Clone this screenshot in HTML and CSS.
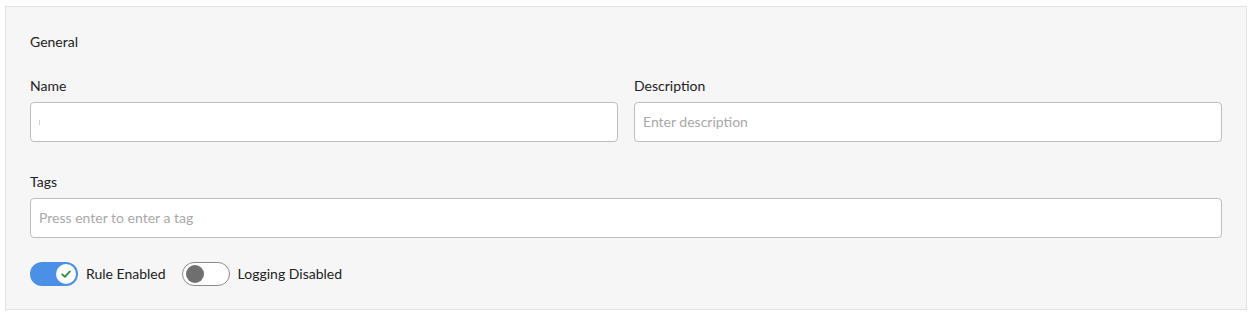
FILE: index.html
```html
<!DOCTYPE html>
<html>
<head>
	<meta charset="utf-8">
	<title>Rule - General</title>
	<link rel="stylesheet" href="styles.css">
</head>
<body>
<div class="panel">
	<div class="section-title">General</div>
	<div class="row">
		<div class="field">
			<label class="label">Name</label>
			<div class="input"><span class="caret"></span></div>
		</div>
		<div class="field">
			<label class="label">Description</label>
			<div class="input placeholder">Enter description</div>
		</div>
	</div>
	<div class="field tags">
		<label class="label">Tags</label>
		<div class="input placeholder">Press enter to enter a tag</div>
	</div>
	<div class="switches">
		<div class="switch on">
			<span class="knob">
				<svg width="12" height="12" viewBox="0 0 12 12"><path d="M2.2 6.3 L4.9 8.9 L9.9 3.4" fill="none" stroke="#2f8f46" stroke-width="1.8" stroke-linecap="round" stroke-linejoin="round"/></svg>
			</span>
		</div>
		<span class="switch-label">Rule Enabled</span>
		<div class="switch off"><span class="knob"></span></div>
		<span class="switch-label">Logging Disabled</span>
	</div>
</div>
</body>
</html>
```

FILE: styles.css
```css
html,body{margin:0;padding:0;background:#fff;}
body{font:14px/18px Lato,"Liberation Sans",sans-serif;color:#222;}
.panel{margin:6px 0 0 5px;width:1192px;padding:26px 24px 23px;border:1px solid #e2e2e2;background:#f6f6f6;}
.section-title{height:18px;}
.row{display:flex;gap:16px;margin-top:26px;}
.field{flex:1;display:flex;flex-direction:column;}
.label{display:block;height:18px;margin-bottom:7px;}
.input{box-sizing:border-box;height:40px;border:1px solid #bdbdbd;border-radius:4px;background:#fff;padding:0 8px;display:flex;align-items:center;}
.placeholder{color:#a8a8a8;}
.caret{display:block;width:1px;height:5px;background:#d0d0d0;}
.tags{margin-top:31px;}
.switches{display:flex;align-items:center;margin-top:24px;height:24px;}
.switch{box-sizing:border-box;width:48px;height:24px;border-radius:12px;display:flex;align-items:center;}
.switch.on{background:#4a90e6;justify-content:flex-end;padding-right:2px;}
.switch.on .knob{width:20px;height:20px;border-radius:50%;background:#fff;display:flex;align-items:center;justify-content:center;}
.switch.off{background:#fff;border:1px solid #8c8c8c;padding-left:3px;}
.switch.off .knob{width:18px;height:18px;border-radius:50%;background:#6f6f6f;}
.switch-label{margin:0 16px 0 8px;}
```
